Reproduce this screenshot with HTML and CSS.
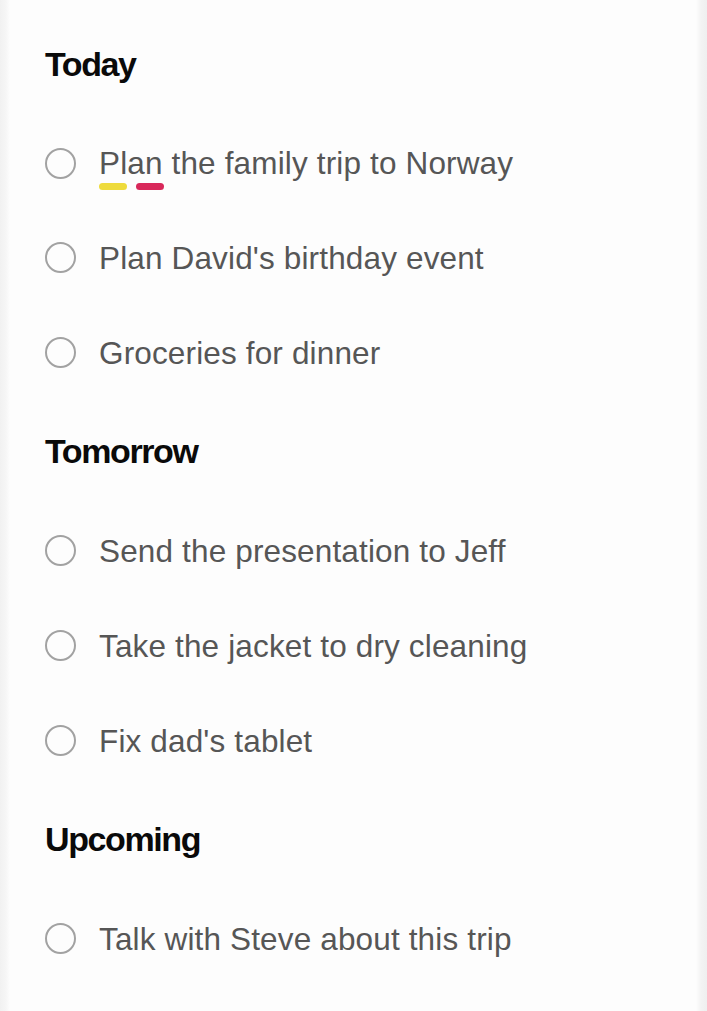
FILE: index.html
```html
<!DOCTYPE html>
<html>
<head>
<meta charset="utf-8">
<link rel="stylesheet" href="styles.css">
</head>
<body>
<div class="screen">
  <main class="list">
    <h2 class="heading">Today</h2>
    <div class="item">
      <span class="check"></span>
      <span class="title">Plan the family trip to Norway
        <span class="tags"><span class="tag yellow"></span><span class="tag red"></span></span>
      </span>
    </div>
    <div class="item"><span class="check"></span><span class="title">Plan David's birthday event</span></div>
    <div class="item"><span class="check"></span><span class="title">Groceries for dinner</span></div>
    <h2 class="heading">Tomorrow</h2>
    <div class="item"><span class="check"></span><span class="title">Send the presentation to Jeff</span></div>
    <div class="item"><span class="check"></span><span class="title">Take the jacket to dry cleaning</span></div>
    <div class="item"><span class="check"></span><span class="title">Fix dad's tablet</span></div>
    <h2 class="heading">Upcoming</h2>
    <div class="item"><span class="check"></span><span class="title">Talk with Steve about this trip</span></div>
  </main>
</div>
</body>
</html>
```
FILE: styles.css
```css
html, body {
  margin: 0;
  padding: 0;
  background: #fdfdfd;
}
.screen {
  width: 707px;
  height: 1011px;
  box-sizing: border-box;
  background: linear-gradient(to right, #f1f1f1 0, #f6f6f6 6px, #fdfdfd 10px, #fdfdfd 696px, #f3f3f3 701px, #efefef 707px);
  overflow: hidden;
}
.list {
  display: flex;
  flex-direction: column;
  padding: 13px 0 0 45px;
  font-family: "Liberation Sans", Arial, sans-serif;
}
.heading {
  margin: 0;
  height: 103px;
  display: flex;
  align-items: center;
  font-size: 34px;
  font-weight: 700;
  letter-spacing: -1.4px;
  color: #0a0a0a;
}
.item {
  height: 95px;
  display: flex;
  align-items: center;
  gap: 23px;
}
.item:nth-of-type(1) {
  height: 94px;
}
.check {
  flex: none;
  width: 27px;
  height: 27px;
  border: 2px solid #a2a2a2;
  border-radius: 50%;
}
.title {
  position: relative;
  font-size: 31.5px;
  letter-spacing: 0.15px;
  color: #565656;
  line-height: 36px;
}
.tags {
  position: absolute;
  left: 0;
  top: 38px;
  display: flex;
  gap: 9px;
}
.tag {
  width: 28px;
  height: 7px;
  border-radius: 4px;
}
.yellow { background: #eedb3c; }
.red { background: #d8285a; }
```
